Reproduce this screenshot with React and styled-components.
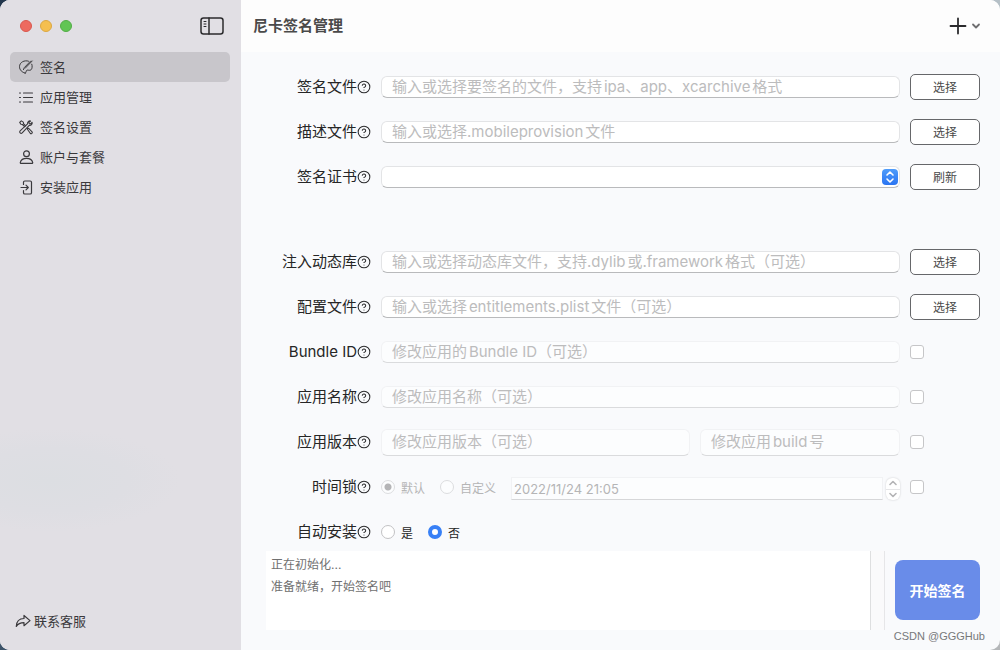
import { useState } from "react";
import styled, { createGlobalStyle } from "styled-components";
import { HelpCircle } from "lucide-react";

const GlobalStyle = createGlobalStyle`
  * {
    box-sizing: border-box;
  }
  body {
    margin: 0;
    background: linear-gradient(100deg, #22364c 0%, #b9dcf0 60%, #b4b6b8 100%);
    font-family: Inter, "Noto Sans CJK SC", sans-serif;
    color: #262626;
  }
  button,
  input,
  select,
  textarea {
    font-family: inherit;
    margin: 0;
  }
`;

const Window = styled.div`
  position: relative;
  display: flex;
  min-height: 100vh;
  border-radius: 10px;
  overflow: hidden;
  background: #f9fafc;
`;

const Sidebar = styled.aside`
  display: flex;
  flex-direction: column;
  flex: 0 0 241px;
  padding: 0 11px 16px 10px;
  background: radial-gradient(
      ellipse 130px 52px at 50px 480px,
      #dcdee2 0%,
      #dedee3 60%,
      #e1dfe4 100%
    )
    #e1dfe4;
`;

const TitleBar = styled.div`
  display: flex;
  align-items: center;
  height: 52px;
  padding: 0 6px 0 10px;
  gap: 8px;
`;

const Light = styled.button`
  width: 12px;
  height: 12px;
  padding: 0;
  border-radius: 50%;
  border: 1px solid ${(props) => props.$edge};
  background: ${(props) => props.$color};
`;

const IconButton = styled.button`
  display: flex;
  align-items: center;
  padding: 0;
  border: none;
  background: none;
  color: #2b2b2d;
  cursor: pointer;
`;

const ToggleButton = styled(IconButton)`
  margin-left: auto;
`;

const Nav = styled.nav`
  display: flex;
  flex-direction: column;
  flex: 1;
`;

const NavItem = styled.button`
  display: flex;
  align-items: center;
  gap: 6px;
  height: 30px;
  padding: 0 8px;
  border: none;
  border-radius: 5px;
  background: ${(props) => (props.$active ? "#c8c6cb" : "transparent")};
  color: #3a393c;
  font-size: 13px;
  cursor: pointer;
  span {
    padding-bottom: 2px;
  }
`;

const Support = styled.a`
  display: flex;
  align-items: center;
  gap: 3px;
  height: 26px;
  padding-left: 5px;
  color: #3a393c;
  font-size: 13px;
  text-decoration: none;
  span {
    padding-bottom: 2px;
  }
`;

const Main = styled.main`
  display: flex;
  flex-direction: column;
  flex: 1;
  min-width: 0;
`;

const Header = styled.header`
  display: flex;
  align-items: center;
  justify-content: space-between;
  height: 52px;
  padding: 0 19px 0 12px;
  background: #fdfdfd;
`;

const Title = styled.h1`
  margin: 0;
  padding-bottom: 4px;
  font-size: 15px;
  font-weight: 700;
  color: #4a4a4a;
`;

const Form = styled.form`
  display: flex;
  flex-direction: column;
  flex: 1;
  gap: 19px;
  padding: 22px 20px 20px 25px;
`;

const Row = styled.div`
  display: grid;
  grid-template-columns: 105px 1fr 70px;
  align-items: center;
  column-gap: 10px;
  height: 26px;
  margin-top: ${(props) => (props.$gapTop ? "40px" : "0")};
`;

const LabelCell = styled.div`
  display: flex;
  align-items: center;
  justify-content: flex-end;
  font-size: 15px;
  line-height: 22px;
  white-space: nowrap;
`;

const Fields = styled.div`
  display: flex;
  align-items: center;
  gap: 10px;
  height: 26px;
`;

const TextInput = styled.input`
  flex: ${(props) => (props.$width ? `0 0 ${props.$width}` : "1")};
  min-width: 0;
  height: ${(props) => (props.$tall ? "27px" : "22px")};
  padding: 0 10px 2px;
  border: 1px solid #e3e4e6;
  border-bottom-color: #b9babc;
  border-radius: 6px;
  background: #fff;
  color: #262626;
  font-size: 15px;
  text-autospace: normal;
  outline: none;
  &::placeholder {
    color: #bcbcbd;
    opacity: 1;
  }
  &:disabled {
    border-color: #f1f2f4;
    border-bottom-color: #dadbdd;
    background: #fcfdfe;
  }
`;

const SelectWrap = styled.div`
  position: relative;
  flex: 1;
  display: flex;
`;

const Select = styled.select`
  appearance: none;
  width: 100%;
  height: 22px;
  padding: 0 24px 0 10px;
  border: 1px solid #e3e4e6;
  border-bottom-color: #b9babc;
  border-radius: 6px;
  background: #fff;
  font-size: 13px;
  outline: none;
`;

const SelectBadge = styled.span`
  position: absolute;
  top: 3px;
  right: 2px;
  display: flex;
  align-items: center;
  justify-content: center;
  width: 16px;
  height: 16px;
  border-radius: 4px;
  background: linear-gradient(#4f9cfa, #2a74f2);
  color: #fff;
  pointer-events: none;
`;

const SideButton = styled.button`
  height: 26px;
  padding: 0 0 2px;
  border: 1px solid #66676a;
  border-radius: 5px;
  background: #fff;
  color: #4a4a4a;
  font-size: 12px;
  cursor: pointer;
`;

const Checkbox = styled.input`
  appearance: none;
  width: 14px;
  height: 14px;
  border: 1px solid #c6c6c8;
  border-radius: 3px;
  background: #fff;
  &:checked {
    border-color: #2f7bf6;
    background: #2f7bf6;
  }
`;

const RadioLabel = styled.label`
  display: flex;
  align-items: center;
  gap: 6px;
  margin-right: 5px;
  font-size: 12px;
  white-space: nowrap;
  color: ${(props) => (props.$off ? "#b5b5b6" : "#262626")};
`;

const Radio = styled.input`
  appearance: none;
  width: 14px;
  height: 14px;
  border: 1px solid #c2c2c4;
  border-radius: 50%;
  background: #fff;
  &:checked {
    border: 4px solid #3880f6;
  }
  &:disabled {
    border: 1px solid #dcdddf;
    background: #fcfdfe;
  }
  &:disabled:checked {
    background: radial-gradient(circle, #b4b4b6 0 3px, #fcfdfe 4px);
  }
`;

const DateGroup = styled.div`
  display: flex;
  align-items: flex-end;
  align-self: flex-end;
  flex: 1;
  gap: 3px;
  min-width: 0;
`;

const DateInput = styled.input`
  flex: 1;
  min-width: 0;
  height: 23px;
  padding: 0 2px;
  border: 1px solid #f1f2f4;
  border-bottom-color: #d6d7d9;
  background: #fcfdfe;
  color: #b5b5b6;
  font-size: 13px;
  outline: none;
`;

const Stepper = styled.div`
  display: flex;
  flex-direction: column;
  width: 14px;
  height: 22px;
  border-radius: 6px;
  background: #fff;
  box-shadow: 0 0 2px #c8c8ca;
  overflow: hidden;
`;

const Step = styled.button`
  display: flex;
  flex: 1;
  align-items: center;
  justify-content: center;
  padding: 0;
  border: none;
  background: transparent;
  color: #b4b4b6;
  & + & {
    border-top: 1px solid #e6e6e8;
  }
`;

const Bottom = styled.div`
  display: flex;
  flex: 1;
  min-height: 79px;
  margin-top: -13px;
`;

const Log = styled.output`
  flex: 1;
  padding: 3px 5px;
  border-right: 1px solid #dedfe0;
  background: #fff;
  color: #707070;
  font-size: 12px;
  line-height: 22px;
`;

const Gutter = styled.div`
  width: 14px;
  margin-right: 10px;
  border-right: 1px solid #e6e6e8;
  background: #fafafb;
`;

const StartButton = styled.button`
  align-self: flex-end;
  width: 85px;
  height: 60px;
  margin-bottom: 10px;
  padding: 0;
  border: none;
  border-radius: 8px;
  background: #698ce9;
  color: #fff;
  font-size: 14px;
  font-weight: 700;
  cursor: pointer;
`;

const Watermark = styled.span`
  position: absolute;
  right: 15px;
  bottom: 6px;
  color: #77787a;
  font-family: "Liberation Sans", sans-serif;
  font-size: 11px;
  line-height: 16px;
`;

const Svg = ({ w = 16, h = 16, sw = 1, children }) => (
  <svg
    width={w}
    height={h}
    viewBox={`0 0 ${w} ${h}`}
    fill="none"
    stroke="currentColor"
    strokeWidth={sw}
    strokeLinecap="round"
    strokeLinejoin="round"
    aria-hidden="true"
  >
    {children}
  </svg>
);

const SignIcon = () => (
  <Svg>
    <path d="M10.5 2.200C6.500.700 1.500 3.300 1.500 7.700c0 3.100 2.400 5.800 6 6.500" />
    <path d="M13.800 5.200c.7 2 .4 4.500-.8 5.600-.7.700-1.800.5-3.200.3-1.300-.1-1.400.6-1.700 1.600-.2.900-.6 1.400-1.300 1.300" />
    <path d="m14.200 2-7 7.200M12.700 2 6.300 8.600l-.8 2" />
  </Svg>
);

const ListIcon = () => (
  <Svg sw={1.2}>
    <path d="M1.500 4h1M1.500 8.500h1M1.500 13h1M5.500 4h9M5.500 8.500h9M5.500 13h9" />
  </Svg>
);

const ToolsIcon = () => (
  <Svg sw={1.1}>
    <path d="M1.700 3.400 3.300 1.900l2 1.200.2 1.500 2.200 2.200M1.700 3.400l1.200 1.900 1.500.2 2.200 2.200" />
    <path d="m9.400 10.200.1-.8.900-.2 3.700 3.600c.8.900-.8 2.500-1.700 1.700z" />
    <path d="M12.600 2c-1.800-.5-3.400 1-3 2.800l-7.500 7c-1.300 1.400.7 3.400 2.100 2.100l7-7.500c1.900.4 3.400-1.200 2.900-3l-1.600 1.500-1.300-.3-.3-1.200z" />
  </Svg>
);

const UserIcon = () => (
  <Svg sw={1.2}>
    <circle cx="8.500" cy="4.800" r="2.900" />
    <path d="M3.100 14.400c-.6 0-.9-.4-.8-1 .6-2.300 3.100-4 6.200-4s5.600 1.700 6.200 4c.1.600-.2 1-.8 1z" />
  </Svg>
);

const InstallIcon = () => (
  <Svg sw={1.2}>
    <path d="M5.500 5.500V3.300C5.500 2.400 6 2 6.800 2h5.400c.8 0 1.300.4 1.300 1.300v10.400c0 .9-.5 1.300-1.300 1.300H6.800c-.8 0-1.300-.4-1.300-1.300v-2.200" />
    <path d="M3 8.500h7M8 6.200l2.300 2.300L8 10.800" />
  </Svg>
);

const ShareIcon = () => (
  <Svg sw={1.200}>
    <path d="M9 2.500v3C4.500 5.500 1.500 8.300 1.300 13.500c1.700-2.900 4-3.800 7.700-3.800v3l6-5.100z" />
  </Svg>
);

const navItems = [
  { name: "签名", Icon: SignIcon },
  { name: "应用管理", Icon: ListIcon },
  { name: "签名设置", Icon: ToolsIcon },
  { name: "账户与套餐", Icon: UserIcon },
  { name: "安装应用", Icon: InstallIcon },
];

const FieldLabel = ({ text, htmlFor, id }) => (
  <LabelCell>
    {htmlFor ? <label htmlFor={htmlFor}>{text}</label> : <span id={id}>{text}</span>}
    <IconButton type="button" aria-label={`${text}说明`}>
      <HelpCircle size={14} strokeWidth={1.8} />
    </IconButton>
  </LabelCell>
);

const FileRow = ({ id, label, placeholder, gapTop }) => (
  <Row $gapTop={gapTop}>
    <FieldLabel text={label} htmlFor={id} />
    <Fields>
      <TextInput id={id} type="text" placeholder={placeholder} />
    </Fields>
    <SideButton type="button">选择</SideButton>
  </Row>
);

const OptionalRow = ({ id, label, placeholder }) => {
  const [enabled, setEnabled] = useState(false);
  return (
    <Row>
      <FieldLabel text={label} htmlFor={id} />
      <Fields>
        <TextInput id={id} type="text" placeholder={placeholder} disabled={!enabled} />
      </Fields>
      <Checkbox
        type="checkbox"
        aria-label={`修改${label}`}
        checked={enabled}
        onChange={() => setEnabled(!enabled)}
      />
    </Row>
  );
};

function App() {
  const [page, setPage] = useState("签名");
  const [version, setVersion] = useState(false);
  const [timeLock, setTimeLock] = useState(false);
  const [autoInstall, setAutoInstall] = useState("no");

  return (
    <>
      <GlobalStyle />
      <Window>
        <Sidebar>
          <TitleBar>
            <Light $color="#ed6a5f" $edge="#d9584e" aria-label="关闭" />
            <Light $color="#f5bf4f" $edge="#dba842" aria-label="最小化" />
            <Light $color="#61c554" $edge="#52ad46" aria-label="缩放" />
            <ToggleButton aria-label="边栏">
              <Svg w={24} h={18} sw={1.5}>
                <rect x="1" y="1" width="22" height="16" rx="2.500" />
                <path d="M9 1v16" />
                <path d="M4 4.500h2M4 7h2M4 9.500h2" strokeWidth="1" />
              </Svg>
            </ToggleButton>
          </TitleBar>
          <Nav>
            {navItems.map(({ name, Icon }) => (
              <NavItem key={name} $active={page === name} onClick={() => setPage(name)}>
                <Icon />
                <span>{name}</span>
              </NavItem>
            ))}
          </Nav>
          <Support href="#support">
            <ShareIcon />
            <span>联系客服</span>
          </Support>
        </Sidebar>
        <Main>
          <Header>
            <Title>尼卡签名管理</Title>
            <IconButton aria-label="新建">
              <Svg w={18} h={18} sw={1.8}>
                <path d="M9 1.500v15M1.500 9h15" />
              </Svg>
              <Svg w={14} h={18} sw={1.8}>
                <path d="M6 7.500 9 10.500l3-3" stroke="#6e6e70" />
              </Svg>
            </IconButton>
          </Header>
          <Form onSubmit={(event) => event.preventDefault()}>
            <FileRow
              id="file"
              label="签名文件"
              placeholder="输入或选择要签名的文件，支持ipa、app、xcarchive格式"
            />
            <FileRow
              id="profile"
              label="描述文件"
              placeholder="输入或选择.mobileprovision文件"
            />
            <Row>
              <FieldLabel text="签名证书" htmlFor="cert" />
              <Fields>
                <SelectWrap>
                  <Select id="cert">
                    <option value=""></option>
                  </Select>
                  <SelectBadge>
                    <Svg w={10} h={14} sw={1.6}>
                      <path d="M2 5l3-3 3 3M2 9l3 3 3-3" />
                    </Svg>
                  </SelectBadge>
                </SelectWrap>
              </Fields>
              <SideButton type="button">刷新</SideButton>
            </Row>
            <FileRow
              id="dylib"
              label="注入动态库"
              placeholder="输入或选择动态库文件，支持.dylib或.framework格式（可选）"
              gapTop
            />
            <FileRow
              id="plist"
              label="配置文件"
              placeholder="输入或选择entitlements.plist文件（可选）"
            />
            <OptionalRow
              id="bundle"
              label="Bundle ID"
              placeholder="修改应用的Bundle ID（可选）"
            />
            <OptionalRow id="name" label="应用名称" placeholder="修改应用名称（可选）" />
            <Row>
              <FieldLabel text="应用版本" htmlFor="version" />
              <Fields>
                <TextInput
                  id="version"
                  type="text"
                  placeholder="修改应用版本（可选）"
                  disabled={!version}
                  $tall
                />
                <TextInput
                  type="text"
                  aria-label="build号"
                  placeholder="修改应用build号"
                  disabled={!version}
                  $tall
                  $width="200px"
                />
              </Fields>
              <Checkbox
                type="checkbox"
                aria-label="修改应用版本"
                checked={version}
                onChange={() => setVersion(!version)}
              />
            </Row>
            <Row>
              <FieldLabel text="时间锁" id="lock" />
              <Fields role="radiogroup" aria-labelledby="lock">
                <RadioLabel $off={!timeLock}>
                  <Radio type="radio" name="lock" defaultChecked disabled={!timeLock} />
                  默认
                </RadioLabel>
                <RadioLabel $off={!timeLock}>
                  <Radio type="radio" name="lock" disabled={!timeLock} />
                  自定义
                </RadioLabel>
                <DateGroup>
                  <DateInput
                    type="text"
                    aria-label="时间"
                    defaultValue="2022/11/24 21:05"
                    disabled={!timeLock}
                  />
                  <Stepper>
                    <Step type="button" aria-label="增加" disabled={!timeLock}>
                      <Svg w={8} h={6} sw={1.6}>
                        <path d="M1 4.500l3-3 3 3" />
                      </Svg>
                    </Step>
                    <Step type="button" aria-label="减少" disabled={!timeLock}>
                      <Svg w={8} h={6} sw={1.6}>
                        <path d="M1 1.500l3 3 3-3" />
                      </Svg>
                    </Step>
                  </Stepper>
                </DateGroup>
              </Fields>
              <Checkbox
                type="checkbox"
                aria-label="修改时间锁"
                checked={timeLock}
                onChange={() => setTimeLock(!timeLock)}
              />
            </Row>
            <Row>
              <FieldLabel text="自动安装" id="auto" />
              <Fields role="radiogroup" aria-labelledby="auto">
                <RadioLabel>
                  <Radio
                    type="radio"
                    name="auto"
                    checked={autoInstall === "yes"}
                    onChange={() => setAutoInstall("yes")}
                  />
                  是
                </RadioLabel>
                <RadioLabel>
                  <Radio
                    type="radio"
                    name="auto"
                    checked={autoInstall === "no"}
                    onChange={() => setAutoInstall("no")}
                  />
                  否
                </RadioLabel>
              </Fields>
            </Row>
            <Bottom>
              <Log>
                正在初始化...
                <br />
                准备就绪，开始签名吧
              </Log>
              <Gutter />
              <StartButton type="submit">开始签名</StartButton>
            </Bottom>
          </Form>
        </Main>
        <Watermark>CSDN @GGGHub</Watermark>
      </Window>
    </>
  );
}

export default App;
